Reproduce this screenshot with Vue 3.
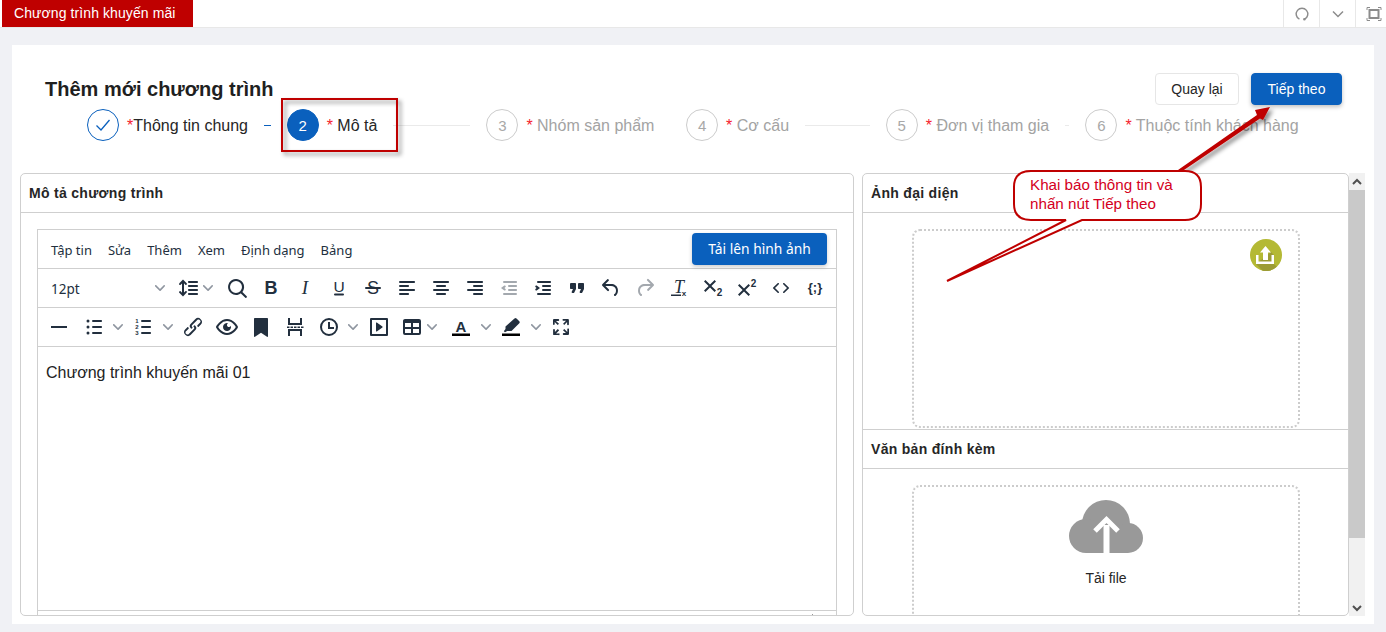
<template>
  <div class="page">
    <header class="topbar">
      <div class="tab">Chương trình khuyến mãi</div>
      <div class="top-actions">
        <button class="top-btn">
          <svg width="16" height="16" viewBox="0 0 16 16" fill="none" stroke="#8c8c8c" stroke-width="1.4">
            <path d="M10.6 13.2A5.8 5.8 0 1 0 5.4 13.2" />
            <circle cx="10.4" cy="13.2" r=".6" fill="#8c8c8c" />
          </svg>
        </button>
        <button class="top-btn">
          <svg width="14" height="14" viewBox="0 0 14 14" fill="none" stroke="#8c8c8c" stroke-width="1.5"><path d="M2 4.5l5 5 5-5" /></svg>
        </button>
        <button class="top-btn">
          <svg width="16" height="16" viewBox="0 0 16 16" fill="none" stroke="#8c8c8c">
            <path d="M1 4V1.500h3M12 1.500h3V4M15 12v2.500h-3M4 14.500H1V12" />
            <rect x="3.500" y="4" width="9" height="8" stroke-width="2" />
          </svg>
        </button>
      </div>
    </header>

    <main class="card">
      <div class="head-row">
        <h1 class="title">Thêm mới chương trình</h1>
        <div class="head-btns">
          <button class="btn">Quay lại</button>
          <button class="btn primary">Tiếp theo</button>
        </div>
      </div>

      <div class="steps">
        <div v-for="(s, i) in steps" :key="s.label" class="step" :class="s.state">
          <span class="dot">
            <svg v-if="s.state === 'done'" width="18" height="18" viewBox="0 0 18 18" fill="none" stroke="#0a60bd" stroke-width="1.3"><path d="M2.500 9.500l4.500 4.500 8.500-10" /></svg>
            <template v-else>{{ i + 1 }}</template>
          </span>
          <span class="step-text"><i>*</i>{{ s.label }}</span>
          <span v-if="i < steps.length - 1" class="step-line"></span>
        </div>
      </div>

      <div class="columns">
        <section class="panel left">
          <div class="panel-head">Mô tả chương trình</div>
          <div class="panel-body">
            <div class="editor">
              <div class="menubar">
                <div class="menus">
                  <span v-for="m in menus" :key="m">{{ m }}</span>
                </div>
                <button class="upload-img">Tải lên hình ảnh</button>
              </div>
              <div class="toolbar">
                <div class="font-select">
                  <span class="font-name">12pt</span>
                  <svg class="chev" viewBox="0 0 10 10" v-html="chevron"></svg>
                </div>
                <div v-for="t in row1" :key="t.k" class="tool" :style="{ width: (t.w || 34) + 'px' }">
                  <svg class="ico" :class="{ off: t.off }" viewBox="0 0 24 24" v-html="icons[t.k]"></svg>
                  <svg v-if="t.g" class="chev" :style="{ marginLeft: t.g + 'px' }" viewBox="0 0 10 10" v-html="chevron"></svg>
                </div>
              </div>
              <div class="toolbar second">
                <div v-for="t in row2" :key="t.k" class="tool" :style="{ width: (t.w || 34) + 'px' }">
                  <svg class="ico" viewBox="0 0 24 24" v-html="icons[t.k]"></svg>
                  <svg v-if="t.g" class="chev" :style="{ marginLeft: t.g + 'px' }" viewBox="0 0 10 10" v-html="chevron"></svg>
                </div>
              </div>
              <div class="content">Chương trình khuyến mãi 01</div>
              <div class="statusbar">
                <svg width="8" height="6" viewBox="0 0 8 6" fill="#999"><rect x="0" y="0" width="1" height="1" /><rect x="2" y="2" width="1" height="1" /><rect x="6" y="4" width="1" height="1" /></svg>
              </div>
            </div>
          </div>
        </section>

        <div class="right-col">
          <section class="panel right">
            <div class="panel-head">Ảnh đại diện</div>
            <div class="drop-wrap first">
              <div class="drop photo">
                <svg class="photo-btn" width="32" height="32" viewBox="0 0 32 32">
                  <circle cx="16" cy="16" r="16" fill="#b4b934" />
                  <path d="M21 13l3 3v9l2.800 2.800A16 16 0 0 1 12.650 31.650L6 25z" fill="#9c9c35" />
                  <path d="M6 16h2.500v6.500h13V16H24v9H6z" fill="#fff" />
                  <path d="M15.500 7l5.500 6.500h-3V21h-5v-7.500h-3z" fill="#fff" />
                </svg>
              </div>
            </div>
            <div class="panel-head ruled">Văn bản đính kèm</div>
            <div class="drop-wrap">
              <div class="drop file">
                <svg width="74" height="54" viewBox="0 0 74 54" fill="#999">
                  <circle cx="37" cy="24" r="24" />
                  <circle cx="17" cy="36" r="17" />
                  <circle cx="59" cy="38" r="15" />
                  <rect x="17" y="30" width="42" height="23" />
                  <path d="M34.500 25h6v28h-6z" fill="#fff" />
                  <path d="M26 31l11.500-11.500L49 31" fill="none" stroke="#fff" stroke-width="5" />
                </svg>
                <span class="file-label">Tải file</span>
              </div>
            </div>
          </section>
          <div class="scrollbar">
            <div class="sb-btn"><svg width="10" height="8" viewBox="0 0 10 8" fill="none" stroke="#505050" stroke-width="2"><path d="M1 6l4-4 4 4" /></svg></div>
            <div class="sb-thumb"></div>
            <div class="sb-track"></div>
            <div class="sb-btn"><svg width="10" height="8" viewBox="0 0 10 8" fill="none" stroke="#505050" stroke-width="2"><path d="M1 2l4 4 4-4" /></svg></div>
          </div>
        </div>
      </div>
    </main>

    <!-- chú thích vẽ đè lên ảnh chụp -->
    <svg class="notes" width="1386" height="632" viewBox="0 0 1386 632">
      <defs>
        <filter id="soft" x="-20%" y="-20%" width="150%" height="150%">
          <feDropShadow dx="3" dy="3" stdDeviation="2" flood-color="#000" flood-opacity=".45" />
        </filter>
      </defs>
      <rect x="282" y="99" width="115" height="52" fill="none" stroke="#bf0000" stroke-width="2" filter="url(#soft)" />
      <path d="M1178 170L1257 115 1255 110 1270 107 1263 120 1260 118.500 1181 172z" fill="#bf0000" filter="url(#soft)" />
      <path
        d="M1031 171H1185Q1201 171 1201 187V204Q1201 220 1185 220H1082L947 281 1066 220H1031Q1014 220 1014 204V187Q1014 171 1031 171z"
        fill="#fff" stroke="#bf0000" stroke-width="2"
      />
      <text class="note-text" x="1030" y="190">Khai báo thông tin và</text>
      <text class="note-text" x="1030" y="209">nhấn nút Tiếp theo</text>
    </svg>
  </div>
</template>

<script setup>
const steps = [
  { label: 'Thông tin chung', state: 'done' },
  { label: ' Mô tả', state: 'active' },
  { label: ' Nhóm sản phẩm', state: 'todo' },
  { label: ' Cơ cấu', state: 'todo' },
  { label: ' Đơn vị tham gia', state: 'todo' },
  { label: ' Thuộc tính khách hàng', state: 'todo' }
]

const menus = ['Tập tin', 'Sửa', 'Thêm', 'Xem', 'Định dạng', 'Bảng']

const chevron = '<path d="M8.700 2.200c.3-.3.800-.3 1 0 .4.400.4.900 0 1.200L5.700 7.800c-.3.300-.9.300-1.200 0L.2 3.400a.8.800 0 0 1 0-1.200c.3-.3.800-.3 1.100 0L5 6l3.700-3.800z"/>'

const sans = 'font-family="Liberation Sans, sans-serif"'
const serif = 'font-family="Liberation Serif, serif"'

/* icon set của toolbar, khung 24x24 */
const icons = {
  lineheight: '<path d="M21 5a1 1 0 0 1 .1 2H13a1 1 0 0 1-.1-2H21zm0 4a1 1 0 0 1 .1 2H13a1 1 0 0 1-.1-2H21zm0 4a1 1 0 0 1 .1 2H13a1 1 0 0 1-.1-2H21zm0 4a1 1 0 0 1 .1 2H13a1 1 0 0 1-.1-2H21zM7 3.600l3.700 3.700a1 1 0 0 1-1.300 1.500h-.1L8 7.300v9.200l1.300-1.300a1 1 0 0 1 1.300 0h.1c.4.400.4 1 0 1.300v.1L7 20.400l-3.700-3.700a1 1 0 0 1 1.300-1.500h.1L6 16.700V7.400L4.700 8.700a1 1 0 0 1-1.300 0h-.1a1 1 0 0 1 0-1.300v-.1L7 3.600z"/>',
  search: '<path d="M16 17.300a8 8 0 1 1 1.400-1.400l4.300 4.400a1 1 0 0 1-1.400 1.400l-4.400-4.300zm-5-.3a6 6 0 1 0 0-12 6 6 0 0 0 0 12z"/>',
  bold: `<text x="12" y="18" text-anchor="middle" font-size="18" font-weight="700" ${sans}>B</text>`,
  italic: `<text x="12" y="18" text-anchor="middle" font-size="19" font-style="italic" ${serif}>I</text>`,
  underline: `<text x="12" y="16" text-anchor="middle" font-size="15.500" ${sans}>U</text><rect x="7" y="17.500" width="10" height="2" rx="1"/>`,
  strike: `<text x="12" y="18" text-anchor="middle" font-size="18" ${sans}>S</text><rect x="4" y="11" width="16" height="2" rx="1"/>`,
  alignleft: '<path d="M5 5h14c.6 0 1 .4 1 1s-.4 1-1 1H5a1 1 0 1 1 0-2zm0 4h8c.6 0 1 .4 1 1s-.4 1-1 1H5a1 1 0 1 1 0-2zm0 8h8c.6 0 1 .4 1 1s-.4 1-1 1H5a1 1 0 0 1 0-2zm0-4h14c.6 0 1 .4 1 1s-.4 1-1 1H5a1 1 0 0 1 0-2z"/>',
  aligncenter: '<path d="M5 5h14c.6 0 1 .4 1 1s-.4 1-1 1H5a1 1 0 1 1 0-2zm3 4h8c.6 0 1 .4 1 1s-.4 1-1 1H8a1 1 0 1 1 0-2zm0 8h8c.6 0 1 .4 1 1s-.4 1-1 1H8a1 1 0 0 1 0-2zm-3-4h14c.6 0 1 .4 1 1s-.4 1-1 1H5a1 1 0 0 1 0-2z"/>',
  alignright: '<path d="M5 5h14c.6 0 1 .4 1 1s-.4 1-1 1H5a1 1 0 1 1 0-2zm6 4h8c.6 0 1 .4 1 1s-.4 1-1 1h-8a1 1 0 0 1 0-2zm0 8h8c.6 0 1 .4 1 1s-.4 1-1 1h-8a1 1 0 0 1 0-2zm-6-4h14c.6 0 1 .4 1 1s-.4 1-1 1H5a1 1 0 0 1 0-2z"/>',
  outdent: '<path d="M7 5h12c.6 0 1 .4 1 1s-.4 1-1 1H7a1 1 0 1 1 0-2zm5 4h7c.6 0 1 .4 1 1s-.4 1-1 1h-7a1 1 0 0 1 0-2zm0 4h7c.6 0 1 .4 1 1s-.4 1-1 1h-7a1 1 0 0 1 0-2zm-5 4h12a1 1 0 0 1 0 2H7a1 1 0 0 1 0-2zm1.600-3.900a1 1 0 0 1-1.300 1.400L4 12l3.300-2.500a1 1 0 0 1 1.300 1.400L7.400 12l1.200 1.100z"/>',
  indent: '<path d="M7 5h12c.6 0 1 .4 1 1s-.4 1-1 1H7a1 1 0 1 1 0-2zm5 4h7c.6 0 1 .4 1 1s-.4 1-1 1h-7a1 1 0 0 1 0-2zm0 4h7c.6 0 1 .4 1 1s-.4 1-1 1h-7a1 1 0 0 1 0-2zm-5 4h12a1 1 0 0 1 0 2H7a1 1 0 0 1 0-2zM4.400 13.100a1 1 0 0 0 1.300 1.400L9 12 5.700 9.500a1 1 0 0 0-1.300 1.400L5.600 12l-1.200 1.100z"/>',
  quote: '<path d="M7.500 17h.9c.4 0 .7-.2.9-.6L11 13V8c0-.6-.4-1-1-1H6a1 1 0 0 0-1 1v4c0 .6.4 1 1 1h2l-1.300 2.700a1 1 0 0 0 .8 1.300zm8 0h.9c.4 0 .7-.2.9-.6L19 13V8c0-.6-.4-1-1-1h-4a1 1 0 0 0-1 1v4c0 .6.4 1 1 1h2l-1.300 2.700a1 1 0 0 0 .8 1.300z"/>',
  undo: '<path d="M6.400 8H12c3.700 0 6.200 2 6.800 5.100.6 2.700-.4 5.600-2.300 6.800a1 1 0 0 1-1-1.800c1.100-.6 1.800-2.700 1.400-4.600-.5-2.100-2.100-3.500-4.900-3.500H6.400l3.300 3.300a1 1 0 1 1-1.400 1.400l-5-5a1 1 0 0 1 0-1.400l5-5a1 1 0 0 1 1.400 1.400L6.400 8z"/>',
  redo: '<path d="M17.600 10H12c-2.800 0-4.400 1.400-4.900 3.500-.4 2 .3 4 1.400 4.600a1 1 0 1 1-1 1.800c-2-1.200-2.900-4.100-2.300-6.800.6-3 3-5.100 6.800-5.100h5.600l-3.300-3.300a1 1 0 1 1 1.400-1.400l5 5a1 1 0 0 1 0 1.400l-5 5a1 1 0 0 1-1.400-1.400l3.300-3.300z"/>',
  clear: `<text x="12" y="17" text-anchor="middle" font-size="18" font-style="italic" ${serif}>T</text><rect x="4" y="18.500" width="10" height="1.500"/><text x="17" y="20" text-anchor="middle" font-size="8" font-weight="700" ${sans}>x</text>`,
  sub: `<path d="M3 5.400L4.400 4 9 8.600 13.600 4 15 5.400 10.400 10 15 14.600 13.600 16 9 11.400 4.400 16 3 14.600 7.600 10z"/><text x="18.500" y="19.500" text-anchor="middle" font-size="10" font-weight="700" ${sans}>2</text>`,
  sup: `<path d="M3 9.400L4.400 8 9 12.600 13.600 8 15 9.400 10.400 14 15 18.600 13.600 20 9 15.400 4.400 20 3 18.600 7.600 14z"/><text x="18.500" y="11" text-anchor="middle" font-size="10" font-weight="700" ${sans}>2</text>`,
  code: '<path d="M9.800 15.700c.3.300.3.800 0 1-.3.400-.9.400-1.200 0l-4.400-4.100a.8.800 0 0 1 0-1.200l4.400-4.200c.3-.3.900-.3 1.200 0 .3.300.3.800 0 1.100L6 12l3.800 3.700zm4.400 0c-.3.300-.3.800 0 1 .3.400.9.400 1.200 0l4.400-4.100a.8.800 0 0 0 0-1.200l-4.400-4.200c-.3-.3-.9-.3-1.200 0-.3.300-.3.800 0 1.100L18 12l-3.800 3.700z"/>',
  sample: `<text x="12" y="16" text-anchor="middle" font-size="13" font-weight="700" ${sans}>{;}</text>`,
  hr: '<path d="M4 11h16v2H4z"/>',
  bullist: '<path d="M11 5h8c.6 0 1 .4 1 1s-.4 1-1 1h-8a1 1 0 0 1 0-2zm0 6h8c.6 0 1 .4 1 1s-.4 1-1 1h-8a1 1 0 0 1 0-2zm0 6h8c.6 0 1 .4 1 1s-.4 1-1 1h-8a1 1 0 0 1 0-2z"/><circle cx="6" cy="6" r="1.500"/><circle cx="6" cy="12" r="1.500"/><circle cx="6" cy="18" r="1.500"/>',
  numlist: `<path d="M11 5h8c.6 0 1 .4 1 1s-.4 1-1 1h-8a1 1 0 0 1 0-2zm0 6h8c.6 0 1 .4 1 1s-.4 1-1 1h-8a1 1 0 0 1 0-2zm0 6h8c.6 0 1 .4 1 1s-.4 1-1 1h-8a1 1 0 0 1 0-2z"/><g font-size="6" font-weight="700" text-anchor="middle" ${sans}><text x="6" y="8">1</text><text x="6" y="14">2</text><text x="6" y="20">3</text></g>`,
  link: '<path d="M6.200 12.300a1 1 0 0 1 1.400 1.400l-2 2a2 2 0 1 0 2.600 2.800l4.800-4.800a1 1 0 0 0 0-1.400 1 1 0 1 1 1.400-1.300 2.900 2.900 0 0 1 0 4L9.600 20a3.900 3.900 0 0 1-5.500-5.500l2-2zm11.600-.6a1 1 0 0 1-1.400-1.400l2-2a2 2 0 1 0-2.600-2.800L11 10.300a1 1 0 0 0 0 1.400A1 1 0 1 1 9.600 13a2.900 2.900 0 0 1 0-4L14.400 4a3.900 3.900 0 0 1 5.500 5.500l-2 2z"/>',
  preview: '<path d="M3.500 12.500c.5.800 1.100 1.600 1.800 2.300 2 2 4.200 3.200 6.700 3.200s4.700-1.200 6.700-3.200a16.200 16.200 0 0 0 2.100-2.800 15.700 15.700 0 0 0-2.100-2.800c-2-2-4.200-3.200-6.700-3.200a9.300 9.300 0 0 0-6.700 3.200A16.200 16.200 0 0 0 3.200 12c0 .2.2.3.3.5zm-2.400-1l.7-1.200L4 7.800C6.200 5.400 8.900 4 12 4c3 0 5.800 1.400 8.100 3.800a18.200 18.200 0 0 1 2.800 3.700v1l-.7 1.200-2.100 2.500c-2.300 2.400-5 3.800-8.100 3.800-3 0-5.800-1.400-8.100-3.800a18.200 18.200 0 0 1-2.800-3.700 1 1 0 0 1 0-1zm12-3.300a2 2 0 1 0 2.700 2.600 4 4 0 1 1-2.700-2.600z"/>',
  bookmark: '<path d="M6 3h12c.6 0 1 .4 1 1v17.300c0 .4-.2.6-.5.6l-.5-.2-6-3.900-6 3.900-.5.200c-.3 0-.5-.2-.5-.6V4c0-.6.4-1 1-1z"/>',
  pagebreak: '<path d="M7 3v5h10V3h2v7H5V3zM5 21v-7h14v7h-2v-5H7v5zM4 11.500h2.500v1.500H4zm3.500 0H10v1.500H7.500zm3.500 0h2.500v1.500H11zm3.500 0H17v1.500h-2.500zm3.500 0h2.500v1.500H18z"/>',
  time: '<path fill-rule="evenodd" d="M12 3a9 9 0 1 1 0 18 9 9 0 0 1 0-18zm0 2a7 7 0 1 0 0 14 7 7 0 0 0 0-14z"/><path d="M11 7h2v5h4v2h-6z"/>',
  embed: '<path d="M4 3h16a1 1 0 0 1 1 1v16a1 1 0 0 1-1 1H4a1 1 0 0 1-1-1V4a1 1 0 0 1 1-1zm1 2v14h14V5H5zm4.800 2.600l5.600 4a.5.500 0 0 1 0 .8l-5.600 4A.5.500 0 0 1 9 16V8a.5.500 0 0 1 .8-.4z"/>',
  table: '<path d="M19 4a2 2 0 0 1 2 2v12a2 2 0 0 1-2 2H5a2 2 0 0 1-2-2V6c0-1.100.9-2 2-2h14zM5 14v4h6v-4H5zm14 0h-6v4h6v-4zm0-6h-6v4h6V8zM5 12h6V8H5v4z"/>',
  color: `<text x="12" y="16.500" text-anchor="middle" font-size="15" font-weight="700" ${sans}>A</text><rect x="3" y="18.500" width="18" height="2.500" fill="#000"/>`,
  highlight: '<path d="M15.500 3.500a1.500 1.500 0 0 1 2 0l2.800 2.700a1.500 1.500 0 0 1 0 2L12.500 16H8.200L6 17.300 4.800 16.200 6.500 14v-2.500z"/><rect x="3" y="18.500" width="18" height="2.500" fill="#000"/>',
  fullscreen: '<path d="M15.300 10l-1.200-1.300 2.900-3h-2.300a.9.900 0 1 1 0-1.700H19c.5 0 .9.400.9.900v4.400a.9.900 0 1 1-1.800 0V7l-2.900 3zm0 4l3 2.900v-2.300a.9.900 0 1 1 1.700 0V19c0 .5-.4.900-.9.900h-4.400a.9.900 0 1 1 0-1.800H17l-3-2.900 1.300-1.200zM10 15.400l-2.900 3h2.300a.9.900 0 1 1 0 1.700H5a.9.900 0 0 1-.9-.9v-4.400a.9.900 0 1 1 1.800 0V17l2.900-3 1.200 1.300zM8.700 10L5.700 7v2.300a.9.900 0 0 1-1.700 0V5c0-.5.400-.9.900-.9h4.400a.9.900 0 0 1 0 1.800H7l3 2.900-1.300 1.200z"/>'
}

/* w = bề rộng nút, g = khoảng cách tới mũi tên */
const row1 = [
  { k: 'lineheight', w: 49, g: 3 },
  { k: 'search' }, { k: 'bold' }, { k: 'italic' }, { k: 'underline' }, { k: 'strike' },
  { k: 'alignleft' }, { k: 'aligncenter' }, { k: 'alignright' },
  { k: 'outdent', off: true }, { k: 'indent' }, { k: 'quote' }, { k: 'undo' },
  { k: 'redo', off: true }, { k: 'clear' }, { k: 'sub' }, { k: 'sup' }, { k: 'code' }, { k: 'sample' }
]

const row2 = [
  { k: 'hr', w: 35 },
  { k: 'bullist', w: 49, g: 7 },
  { k: 'numlist', w: 50, g: 8 },
  { k: 'link' }, { k: 'preview' }, { k: 'bookmark' }, { k: 'pagebreak' },
  { k: 'time', w: 50, g: 7 },
  { k: 'embed', w: 33 },
  { k: 'table', w: 49, g: 3 },
  { k: 'color', w: 50, g: 8 },
  { k: 'highlight', w: 50, g: 8 },
  { k: 'fullscreen' }
]
</script>

<style>
html, body { margin: 0; overflow: hidden; }
</style>

<style scoped>
.page {
  position: relative;
  height: 632px;
  display: flex;
  flex-direction: column;
  background: #f0f1f5;
  font-family: "Liberation Sans", Arial, sans-serif;
  font-size: 14px;
  color: #262626;
}

button { font: inherit; cursor: pointer; }

/* thanh trên cùng */
.topbar {
  height: 27px;
  background: #fff;
  border-bottom: 1px solid #e8e8e8;
  display: flex;
  justify-content: space-between;
  padding-left: 2px;
  flex: none;
}
.tab {
  width: 179px;
  padding-left: 12px;
  line-height: 27px;
  letter-spacing: .09px;
  background: #bf0000;
  color: #fff;
}
.top-actions { display: flex; margin-right: -5px; }
.top-btn {
  width: 36px;
  height: 27px;
  padding: 0;
  background: #fff;
  border: 0;
  border-left: 1px solid #e8e8e8;
  display: flex;
  align-items: center;
  justify-content: center;
}

.card {
  flex: 1;
  min-height: 0;
  margin: 17px 12px 8px;
  padding: 28px 9px 8px 8px;
  background: #fff;
  display: flex;
  flex-direction: column;
}

.head-row {
  display: flex;
  justify-content: space-between;
  align-items: center;
  height: 32px;
  padding: 0 23px 0 25px;
}
.title {
  margin: 0;
  font-size: 20px;
  font-weight: 700;
  color: #1f1f1f;
}
.head-btns { display: flex; gap: 12px; }
.btn {
  height: 32px;
  width: 84px;
  padding: 0;
  background: #fff;
  border: 1px solid #e6e6e6;
  border-radius: 4px;
  color: #262626;
}
.btn.primary {
  width: 91px;
  background: #0a60bd;
  border-color: #0a60bd;
  color: #fff;
  box-shadow: 0 2px 4px rgba(0, 0, 0, .25);
}

/* các bước */
.steps {
  display: flex;
  height: 32px;
  margin: 4px 0 32px;
  padding-left: 67px;
  font-size: 16px;
}
.step {
  width: 199.700px;
  flex: none;
  display: flex;
  align-items: center;
  color: #a3a3a3;
}
.dot {
  width: 30px;
  height: 30px;
  flex: none;
  border: 1px solid #ccc;
  border-radius: 50%;
  display: flex;
  align-items: center;
  justify-content: center;
  font-size: 15px;
  color: #a8a8a8;
}
.step-text { padding: 2px 0 0 8px; white-space: pre; }
.step-text i { font-style: normal; color: #f5222d; }
.step-line {
  flex: 1;
  min-width: 0;
  height: 1px;
  margin: 0 16px;
  background: #eaeaea;
}
.step.done, .step.active { color: #262626; }
.step.done .dot { border-color: #0a60bd; }
.step.done .step-line { background: #0a60bd; }
.step.active .dot { background: #0a60bd; border-color: #0a60bd; color: #fff; }

/* hai cột */
.columns {
  flex: 1;
  min-height: 0;
  display: flex;
  gap: 8px;
}
.panel {
  background: #fff;
  border: 1px solid #cfcfcf;
  border-radius: 5px;
  overflow: hidden;
  display: flex;
  flex-direction: column;
  box-sizing: border-box;
}
.panel.left { flex: 1; min-width: 0; }
.panel-head {
  height: 38px;
  flex: none;
  padding-left: 8px;
  line-height: 38px;
  border-bottom: 1px solid #cfcfcf;
  font-weight: 700;
  font-size: 14px;
  letter-spacing: .3px;
  color: #262626;
}
.panel-body {
  flex: 1;
  min-height: 0;
  padding: 16px 16px 0;
  overflow: hidden;
}

/* editor */
.editor {
  border: 1px solid #cfcfcf;
  border-bottom: 0;
  font-family: "Noto Sans", sans-serif;
  color: #222f3e;
}
.menubar {
  height: 38px;
  padding: 0 9px 0 13px;
  display: flex;
  align-items: center;
  justify-content: space-between;
  border-bottom: 1px solid #cfcfcf;
}
.menus { display: flex; gap: 16px; padding-top: 2px; font-size: 13px; }
.upload-img {
  width: 135px;
  height: 32px;
  padding: 0 0 2px;
  background: #0a60bd;
  border: 0;
  border-radius: 4px;
  color: #fff;
  font-family: "Noto Sans", sans-serif;
  font-size: 13.800px;
  box-shadow: 0 2px 4px rgba(0, 0, 0, .2);
}
.toolbar {
  height: 38px;
  display: flex;
  align-items: center;
  border-bottom: 1px solid #cfcfcf;
}
.toolbar.second { padding-left: 4px; }
.font-select {
  width: 133px;
  flex: none;
  box-sizing: border-box;
  padding: 0 6px 0 13px;
  display: flex;
  align-items: center;
  justify-content: space-between;
  font-size: 13.500px;
}
.font-name { padding-top: 2px; }
.tool {
  height: 38px;
  flex: none;
  box-sizing: border-box;
  padding-left: 5px;
  display: flex;
  align-items: center;
}
.ico { width: 24px; height: 24px; flex: none; fill: #222f3e; }
.ico.off { fill: #a3a8ae; }
.chev { width: 10px; height: 10px; flex: none; fill: #8f96a0; }
.content {
  height: 264px;
  box-sizing: border-box;
  padding: 17px 8px 0;
  border-bottom: 1px solid #cfcfcf;
  font-family: "Liberation Sans", Arial, sans-serif;
  font-size: 16px;
  line-height: 18px;
  color: #222;
}
.statusbar {
  height: 20px;
  padding: 3px 16px 0 0;
  display: flex;
  justify-content: flex-end;
}

/* cột phải */
.right-col { width: 503px; flex: none; display: flex; }
.panel.right { width: 487px; flex: none; border-top-right-radius: 5px; }
.panel-head.ruled { border-top: 1px solid #cfcfcf; }
.drop-wrap { padding: 16px 0 0; flex: none; }
.drop-wrap.first { padding-bottom: 1px; }
.drop {
  position: relative;
  width: 388px;
  box-sizing: border-box;
  margin-left: 49px;
  border: 2px dotted #ccc;
  border-radius: 8px;
}
.drop.photo { height: 199px; }
.drop.file {
  height: 200px;
  padding-top: 13px;
  display: flex;
  flex-direction: column;
  align-items: center;
}
.photo-btn { position: absolute; top: 8px; right: 16px; }
.file-label { margin-top: 16px; line-height: 16px; color: #262626; }

.scrollbar { width: 16px; display: flex; flex-direction: column; }
.sb-btn {
  height: 17px;
  flex: none;
  background: #f1f1f1;
  display: flex;
  align-items: center;
  justify-content: center;
}
.sb-thumb { height: 348px; flex: none; background: #c9c9c9; }
.sb-track { flex: 1; background: #f1f1f1; }

/* lớp chú thích */
.notes { position: absolute; left: 0; top: 0; pointer-events: none; }
.note-text {
  font-family: "Liberation Sans", Arial, sans-serif;
  font-size: 15.200px;
  fill: #d40022;
}
</style>
